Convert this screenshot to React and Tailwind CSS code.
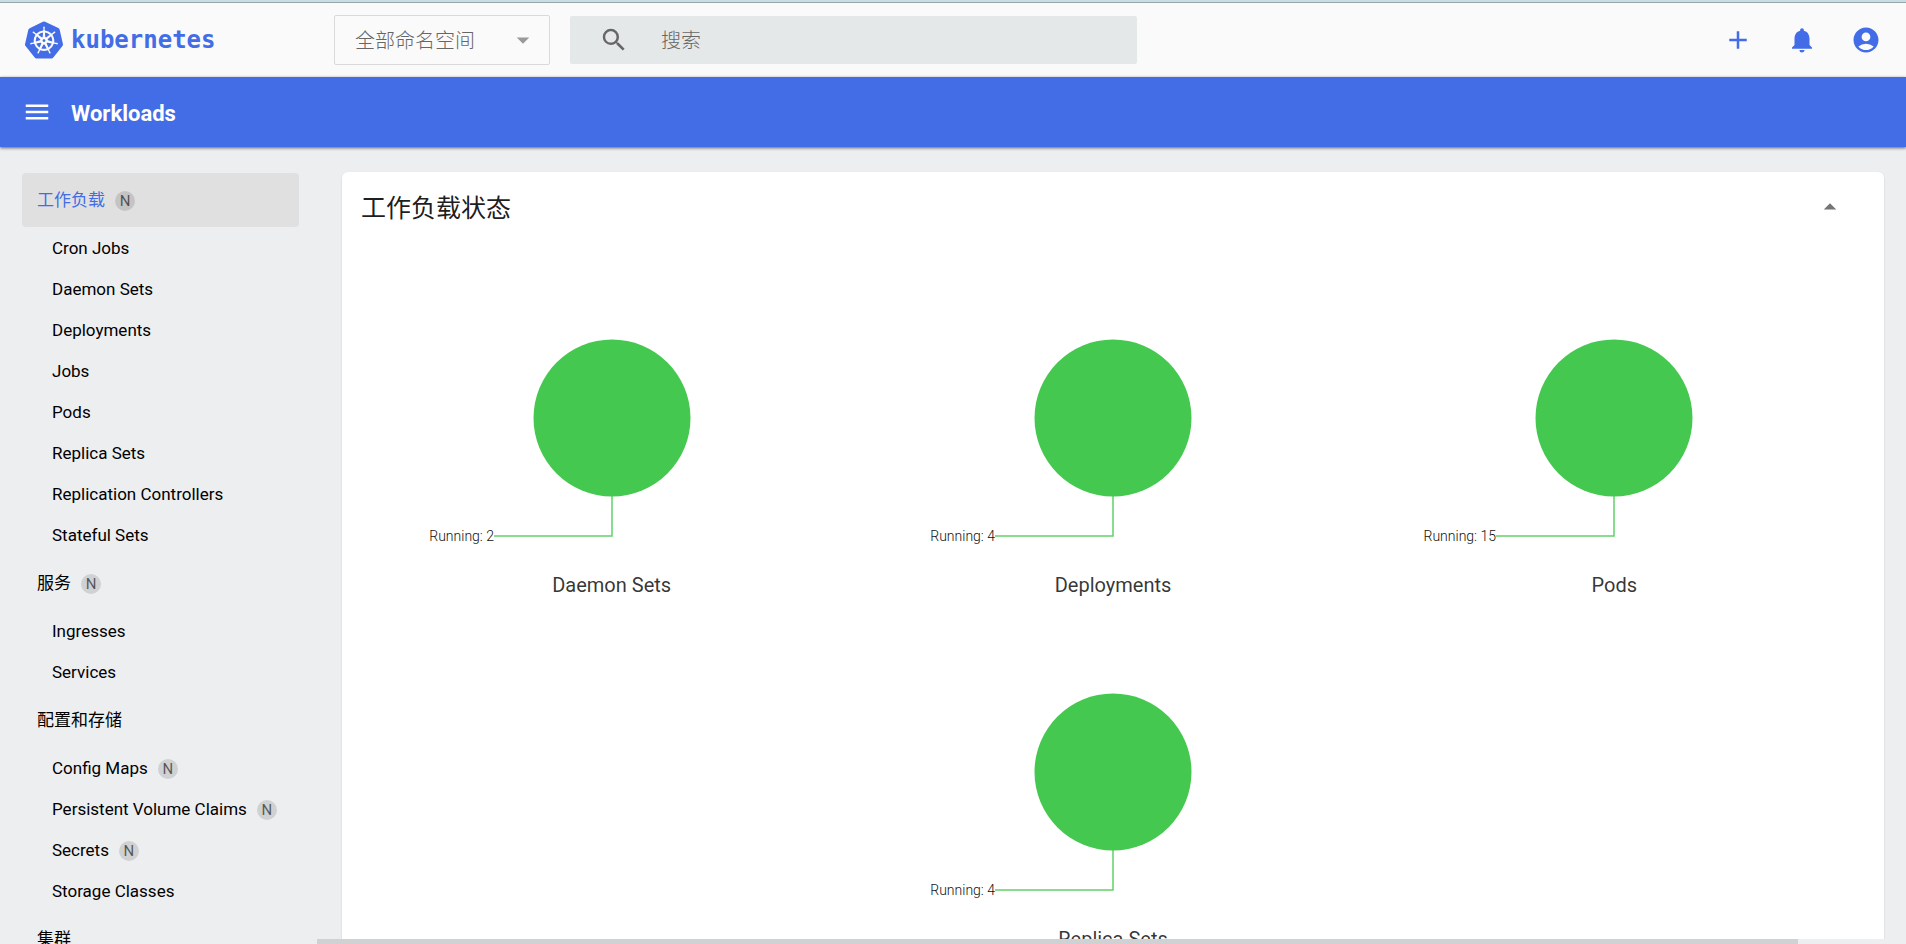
import { MdAccountCircle, MdAdd, MdArrowDropDown, MdArrowDropUp, MdMenu, MdNotifications, MdSearch } from 'react-icons/md';
import { SiKubernetes } from 'react-icons/si';

const NAV = [
  {
    label: '工作负载', namespaced: true, active: true,
    items: [
      { label: 'Cron Jobs' },
      { label: 'Daemon Sets' },
      { label: 'Deployments' },
      { label: 'Jobs' },
      { label: 'Pods' },
      { label: 'Replica Sets' },
      { label: 'Replication Controllers' },
      { label: 'Stateful Sets' },
    ],
  },
  {
    label: '服务', namespaced: true,
    items: [{ label: 'Ingresses' }, { label: 'Services' }],
  },
  {
    label: '配置和存储',
    items: [
      { label: 'Config Maps', namespaced: true },
      { label: 'Persistent Volume Claims', namespaced: true },
      { label: 'Secrets', namespaced: true },
      { label: 'Storage Classes' },
    ],
  },
  { label: '集群', items: [] },
];

const CHARTS = [
  { name: 'Daemon Sets', running: 2 },
  { name: 'Deployments', running: 4 },
  { name: 'Pods', running: 15 },
  { name: 'Replica Sets', running: 4 },
];

function Badge() {
  return (
    <span className="w-5 h-5 rounded-full bg-black/12 text-black/60 text-[15px] leading-5 text-center">N</span>
  );
}

function NavGroup({ group }) {
  return (
    <div>
      <a href="#" className={`flex items-center gap-[10px] h-[54px] pt-0.5 px-[15px] rounded-sm ${group.active ? 'bg-[#e0e0e0] text-[#426de6]' : ''}`}>
        {group.label}
        {group.namespaced && <Badge />}
      </a>
      {group.items.map((item) => (
        <a key={item.label} href="#" className="flex items-center gap-[10px] h-[41px] pt-0.5 pl-[30px] whitespace-nowrap">
          {item.label}
          {item.namespaced && <Badge />}
        </a>
      ))}
    </div>
  );
}

function StatusChart({ name, running }) {
  return (
    <figure className="w-1/3 h-[354px] flex flex-col items-center">
      <svg width="400" height="250" viewBox="0 0 400 250" className="mt-[50px] shrink-0">
        <circle cx="200" cy="79" r="78.5" fill="#45c84f" />
        <path d="M200 157V197H82" fill="none" stroke="#45c84f" strokeOpacity="0.85" strokeWidth="1.5" />
        <text x="82" y="202" textAnchor="end" fontSize="14" fill="#111" className="font-light">Running: {running}</text>
      </svg>
      <figcaption className="text-xl leading-6 text-black/80 -mt-4">{name}</figcaption>
    </figure>
  );
}

export default function App() {
  return (
    <div className="h-screen flex flex-col overflow-hidden bg-[#edeef0] text-[17px] text-black font-[Roboto,'Noto_Sans_CJK_SC',sans-serif]">
      <header className="flex items-center h-[77px] shrink-0 pt-[3px] px-[25px] bg-[#fafafa] shadow-[inset_0_2px_#cbdde2,inset_0_3px_#93a9aa]">
        <a href="#" className="flex items-center gap-[8px] w-[309px] text-[#426de6]">
          <SiKubernetes size={38} />
          <span className="text-[24px] font-bold font-['DejaVu_Sans_Mono',monospace]">kubernetes</span>
        </a>
        <div className="relative w-[216px] text-[#666]">
          <select aria-label="命名空间" className="appearance-none w-full h-[50px] pl-5 pt-0.5 border border-[#dadada] rounded-xs bg-transparent text-xl font-light">
            <option>全部命名空间</option>
          </select>
          <MdArrowDropDown size={30} className="absolute right-3 top-[10px] text-[#999] pointer-events-none" />
        </div>
        <form className="flex items-center gap-8 w-[567px] h-12 ml-5 pl-[29px] rounded-xs bg-[#e4e8e9] text-[#666]">
          <MdSearch size={30} />
          <input type="search" aria-label="搜索" placeholder="搜索" className="flex-1 pt-0.5 bg-transparent outline-none text-xl font-light placeholder:text-[#666]" />
        </form>
        <div className="flex items-center gap-[34px] ml-auto text-[#426de6]">
          <button aria-label="新建"><MdAdd size={30} /></button>
          <button aria-label="通知"><MdNotifications size={30} /></button>
          <button aria-label="账户"><MdAccountCircle size={30} /></button>
        </div>
      </header>

      <div className="relative flex items-center gap-[19px] h-[70px] shrink-0 px-[22px] bg-[#426de6] text-white shadow-[0_1px_3px_rgba(0,0,0,0.6)]">
        <button aria-label="菜单"><MdMenu size={30} /></button>
        <h1 className="pt-0.5 text-[22px] font-bold">Workloads</h1>
      </div>

      <div className="flex flex-1 min-h-0">
        <nav className="flex flex-col gap-px w-[317px] shrink-0 pt-[26px] pl-[22px] pr-[18px] overflow-hidden">
          {NAV.map((group) => <NavGroup key={group.label} group={group} />)}
        </nav>

        <div className="flex flex-col flex-1 min-w-0">
          <main className="flex-1 min-h-0 overflow-hidden pt-[25px] pl-[25px] pr-[22px]">
            <section className="rounded-md bg-white shadow-[0_1px_2px_rgba(0,0,0,0.15)] px-[19px] pb-6">
              <div className="flex items-center justify-between h-[70px] pr-5">
                <h2 className="pt-1 text-[25px] text-black/90">工作负载状态</h2>
                <button aria-label="折叠" className="text-[#757575]"><MdArrowDropUp size={30} /></button>
              </div>
              <div className="flex flex-wrap justify-center pt-[47px]">
                {CHARTS.map((chart) => <StatusChart key={chart.name} {...chart} />)}
              </div>
            </section>
          </main>
          {/* horizontal scrollbar */}
          <div className="h-[5px] shrink-0 pr-[108px]">
            <div className="h-full bg-[#d0d1d3]" />
          </div>
        </div>
      </div>
    </div>
  );
}
